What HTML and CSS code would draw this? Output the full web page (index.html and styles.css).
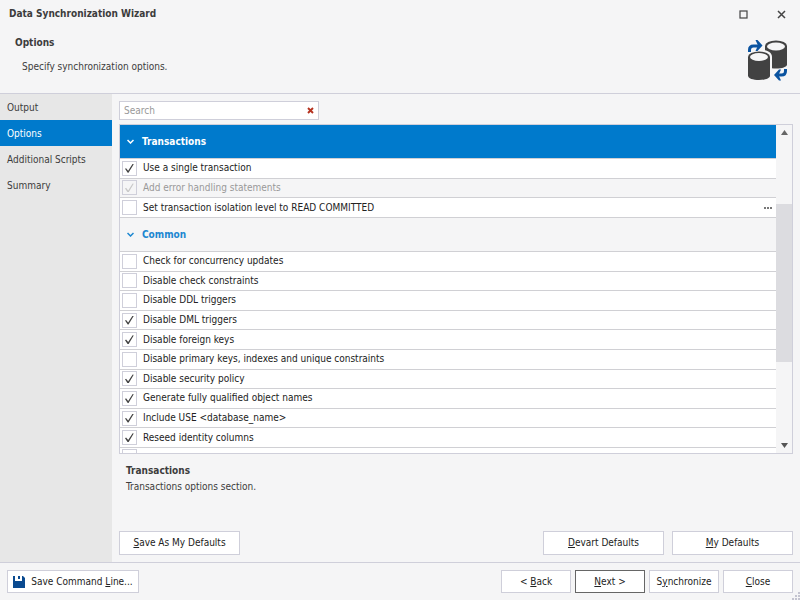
FILE: index.html
```
<!DOCTYPE html>
<html lang="en">
<head>
<meta charset="UTF-8">
<meta name="viewport" content="width=device-width, initial-scale=1.0">
<title>Data Synchronization Wizard</title>
<link rel="stylesheet" href="styles.css">
</head>
<body>

<header class="header">
    <div class="titlebar">
        <h1>Data Synchronization Wizard</h1>
        <button type="button" class="win-btn" aria-label="Maximize">
            <svg width="9" height="9" viewBox="0 0 9 9"><rect x="1" y="1" width="7" height="7" fill="none" stroke="#444" stroke-width="1.2"/></svg>
        </button>
        <button type="button" class="win-btn" aria-label="Close window">
            <svg width="9" height="9" viewBox="0 0 9 9"><path d="M1 1l7 7M8 1l-7 7" stroke="#444" stroke-width="1.5"/></svg>
        </button>
    </div>
    <div class="intro">
        <div>
            <h2>Options</h2>
            <p>Specify synchronization options.</p>
        </div>
        <svg class="logo" width="42" height="42" viewBox="0 0 42 42">
            <path d="M18 6v18.500c0 2.500 5 4 11 4s11-1.500 11-4V6z" fill="#424242"/>
            <ellipse cx="29" cy="6" rx="11" ry="5.500" fill="#424242"/>
            <ellipse cx="29" cy="6.500" rx="9" ry="4" fill="#f5f5f6"/>
            <path d="M-1 17C-1 12 4 9.500 12 9.500S25 12 25 17v25H-1z" fill="#f5f5f6"/>
            <path d="M1 17v18.500C1 38.500 6 40 12 40s11-1.500 11-4.500V17z" fill="#424242"/>
            <ellipse cx="12" cy="17" rx="11" ry="5.500" fill="#424242"/>
            <ellipse cx="12" cy="17" rx="9" ry="4" fill="#f5f5f6"/>
            <path d="M2.500 12V10Q2.500 6 6.500 6H11" fill="none" stroke="#0a53a0" stroke-width="3"/>
            <path d="M8.500 0h2l5 5.500-5 5.500h-2l2.500-5.500z" fill="#0a53a0"/>
            <path d="M38.500 29v2Q38.500 35 34.500 35H31" fill="none" stroke="#0a53a0" stroke-width="3"/>
            <path d="M34 29.500h-2l-5 5.500 5 5.500h2l-2.500-5.500z" fill="#0a53a0"/>
        </svg>
    </div>
</header>

<div class="main">
    <nav class="sidebar">
        <a href="#output">Output</a>
        <a href="#options" class="active">Options</a>
        <a href="#scripts">Additional Scripts</a>
        <a href="#summary">Summary</a>
    </nav>

    <main class="content">
        <div class="search">
            <input type="text" placeholder="Search" aria-label="Search">
            <button type="button" aria-label="Clear search">
                <svg width="7" height="7" viewBox="0 0 7 7"><path d="M1 1l5 5M6 1l-5 5" stroke="#b5321f" stroke-width="1.900"/></svg>
            </button>
        </div>

        <div class="options">
            <div class="list">
                <h3 class="group selected">
                    <svg width="7" height="5" viewBox="0 0 7 5"><path d="M.5 1l3 3 3-3" fill="none" stroke="currentColor" stroke-width="1.500"/></svg>
                    Transactions
                </h3>
                <div class="rows rows-transactions">
                    <label class="row"><input type="checkbox" checked>Use a single transaction</label>
                    <label class="row disabled"><input type="checkbox" checked disabled>Add error handling statements</label>
                    <div class="row">
                        <label><input type="checkbox">Set transaction isolation level to READ COMMITTED</label>
                        <button type="button" class="more" aria-label="Choose isolation level">
                            <svg width="8" height="2" viewBox="0 0 8 2"><path d="M0 0h2v2H0zM3 0h2v2H3zM6 0h2v2H6z" fill="#777"/></svg>
                        </button>
                    </div>
                </div>
                <h3 class="group">
                    <svg width="7" height="5" viewBox="0 0 7 5"><path d="M.5 1l3 3 3-3" fill="none" stroke="currentColor" stroke-width="1.500"/></svg>
                    Common
                </h3>
                <div class="rows rows-common">
                    <label class="row"><input type="checkbox">Check for concurrency updates</label>
                    <label class="row"><input type="checkbox">Disable check constraints</label>
                    <label class="row"><input type="checkbox">Disable DDL triggers</label>
                    <label class="row"><input type="checkbox" checked>Disable DML triggers</label>
                    <label class="row"><input type="checkbox" checked>Disable foreign keys</label>
                    <label class="row"><input type="checkbox">Disable primary keys, indexes and unique constraints</label>
                    <label class="row"><input type="checkbox" checked>Disable security policy</label>
                    <label class="row"><input type="checkbox" checked>Generate fully qualified object names</label>
                    <label class="row"><input type="checkbox" checked>Include USE &lt;database_name&gt;</label>
                    <label class="row"><input type="checkbox" checked>Reseed identity columns</label>
                </div>
                <label class="row"><input type="checkbox"></label>
            </div>
            <div class="scrollbar">
                <svg width="7" height="5" viewBox="0 0 7 5"><path d="M0 5l3.500-5L7 5z" fill="#666"/></svg>
                <div class="track"><div class="thumb"></div></div>
                <svg width="7" height="5" viewBox="0 0 7 5"><path d="M0 0l3.500 5L7 0z" fill="#555"/></svg>
            </div>
        </div>

        <div class="description">
            <h4>Transactions</h4>
            <p>Transactions options section.</p>
        </div>

        <div class="defaults">
            <button type="button" class="btn wide"><span><u>S</u>ave As My Defaults</span></button>
            <button type="button" class="btn wide push"><span><u>D</u>evart Defaults</span></button>
            <button type="button" class="btn wide"><span><u>M</u>y Defaults</span></button>
        </div>
    </main>
</div>

<footer class="footer">
    <button type="button" class="btn save">
        <svg width="12" height="12" viewBox="0 0 12 12"><path d="M0 0h2v5h7V0h1l2 2v10H0z" fill="#0a4a90"/><path d="M5 0h2v3H5z" fill="#0a4a90"/></svg>
        <span>Save Command <u>L</u>ine...</span>
    </button>
    <button type="button" class="btn push"><span>&lt; <u>B</u>ack</span></button>
    <button type="button" class="btn primary"><span><u>N</u>ext &gt;</span></button>
    <button type="button" class="btn"><span>S<u>y</u>nchronize</span></button>
    <button type="button" class="btn"><span><u>C</u>lose</span></button>
    <svg class="grip" width="8" height="8" viewBox="0 0 8 8"><path d="M6 0h2v2H6zM3 3h2v2H3zM6 3h2v2H6zM0 6h2v2H0zM3 6h2v2H3zM6 6h2v2H6z" fill="#c4c4d0"/></svg>
</footer>

</body>
</html>
```
FILE: styles.css
```
* {
    box-sizing: border-box;
}

body {
    margin: 0;
    height: 100vh;
    display: flex;
    flex-direction: column;
    background: #f5f5f6;
    color: #3c3c3c;
    font-family: Tahoma, "DejaVu Sans Condensed", sans-serif;
    font-size: 10px;
    line-height: 14px;
}

h1, h2, h3, h4, p {
    margin: 0;
    font-size: 10px;
}

button, input {
    font: inherit;
    color: inherit;
}

/* Header */
.header {
    height: 94px;
    border-bottom: 1px solid #cfcfda;
}

.titlebar {
    display: flex;
    align-items: center;
    height: 28px;
    padding-left: 9px;
}

.titlebar h1 {
    flex: 1;
}

.win-btn {
    display: flex;
    align-items: center;
    justify-content: center;
    width: 38px;
    height: 28px;
    padding: 0;
    border: none;
    background: none;
}

.intro {
    display: flex;
    justify-content: space-between;
    padding: 8px 11px 0 15px;
}

.intro p {
    padding: 10px 0 0 7px;
}

.logo {
    margin-top: 4px;
}

/* Main area */
.main {
    flex: 1;
    display: flex;
    min-height: 0;
}

.sidebar {
    width: 112px;
    background: #e7e7e7;
}

.sidebar a {
    display: block;
    padding: 7px 7px 5px;
    color: inherit;
    text-decoration: none;
}

.sidebar a.active {
    background: #007acc;
    color: #fff;
}

.content {
    flex: 1;
    display: flex;
    flex-direction: column;
    min-width: 0;
    padding: 7px;
}

.search {
    display: flex;
    align-items: center;
    width: 200px;
    height: 19px;
    background: #fff;
    border: 1px solid #cfcfda;
}

.search input {
    flex: 1;
    min-width: 0;
    padding: 0 4px;
    border: none;
    outline: none;
    background: none;
}

.search input::placeholder {
    color: #999;
}

.search button {
    display: flex;
    padding: 0 4px;
    border: none;
    background: none;
}

/* Options list */
.options {
    flex: 1;
    display: flex;
    min-height: 0;
    margin-top: 4px;
    border: 1px solid #cfcfda;
}

.list {
    flex: 1;
    overflow: hidden;
    background: #fff;
}

.group {
    display: flex;
    align-items: center;
    gap: 8px;
    height: 34px;
    padding-left: 7px;
    border-bottom: 1px solid #d0d0d4;
    background: #f5f5f6;
    color: #1c87d1;
}

.group.selected {
    background: #007acc;
    color: #fff;
}

.rows {
    display: grid;
    grid-auto-rows: 1fr;
}

.rows-transactions {
    height: 59px;
}

.rows-common {
    height: 196px;
}

.row {
    display: flex;
    align-items: center;
    justify-content: space-between;
    padding: 0 4px 0 2px;
    border-bottom: 1px solid #d0d0d4;
    color: #222;
}

label.row {
    justify-content: flex-start;
}

.row label {
    display: flex;
    align-items: center;
}

.row.disabled {
    background: #f5f5f6;
    color: #999;
}

.row input {
    appearance: none;
    flex: none;
    width: 15px;
    height: 15px;
    margin: 1px 6px 1px 0;
    border: 1px solid #cfcfda;
    background: #fff;
}

.row input:checked::before {
    content: "";
    display: block;
    width: 9px;
    height: 9px;
    margin: 2px;
    background: #444;
    clip-path: polygon(0 55%, 12% 48%, 35% 77%, 85% 0, 97% 4%, 39% 100%, 30% 100%);
}

.row input:disabled {
    background: #f5f5f6;
}

.row input:disabled::before {
    background: #c8c8c8;
}

.more {
    display: flex;
    padding: 4px 0;
    border: none;
    background: none;
}

.scrollbar {
    display: flex;
    flex-direction: column;
    align-items: center;
    width: 16px;
    padding: 5px 0;
}

.track {
    flex: 1;
    width: 100%;
    padding-top: 69px;
}

.thumb {
    height: 158px;
    background: #dcdce0;
}

/* Selected option help */
.description {
    height: 77px;
    padding: 10px 7px 0;
}

.description p {
    padding-top: 2px;
}

/* Buttons */
.btn {
    display: flex;
    align-items: center;
    justify-content: center;
    width: 70px;
    height: 23px;
    padding: 0;
    border: 1px solid #cfcfda;
    background: #fff;
    color: #222;
}

.btn.wide {
    width: 121px;
    height: 24px;
}

.btn.primary {
    border-color: #666;
}

.btn.save {
    gap: 6px;
    width: 132px;
}

.push {
    margin-left: auto;
}

.defaults {
    display: flex;
    gap: 8px;
}

.footer {
    position: relative;
    display: flex;
    gap: 4px;
    height: 38px;
    padding: 7px 7px 0;
    border-top: 1px solid #cfcfda;
}

.grip {
    position: absolute;
    right: 0;
    bottom: 0;
}
```
